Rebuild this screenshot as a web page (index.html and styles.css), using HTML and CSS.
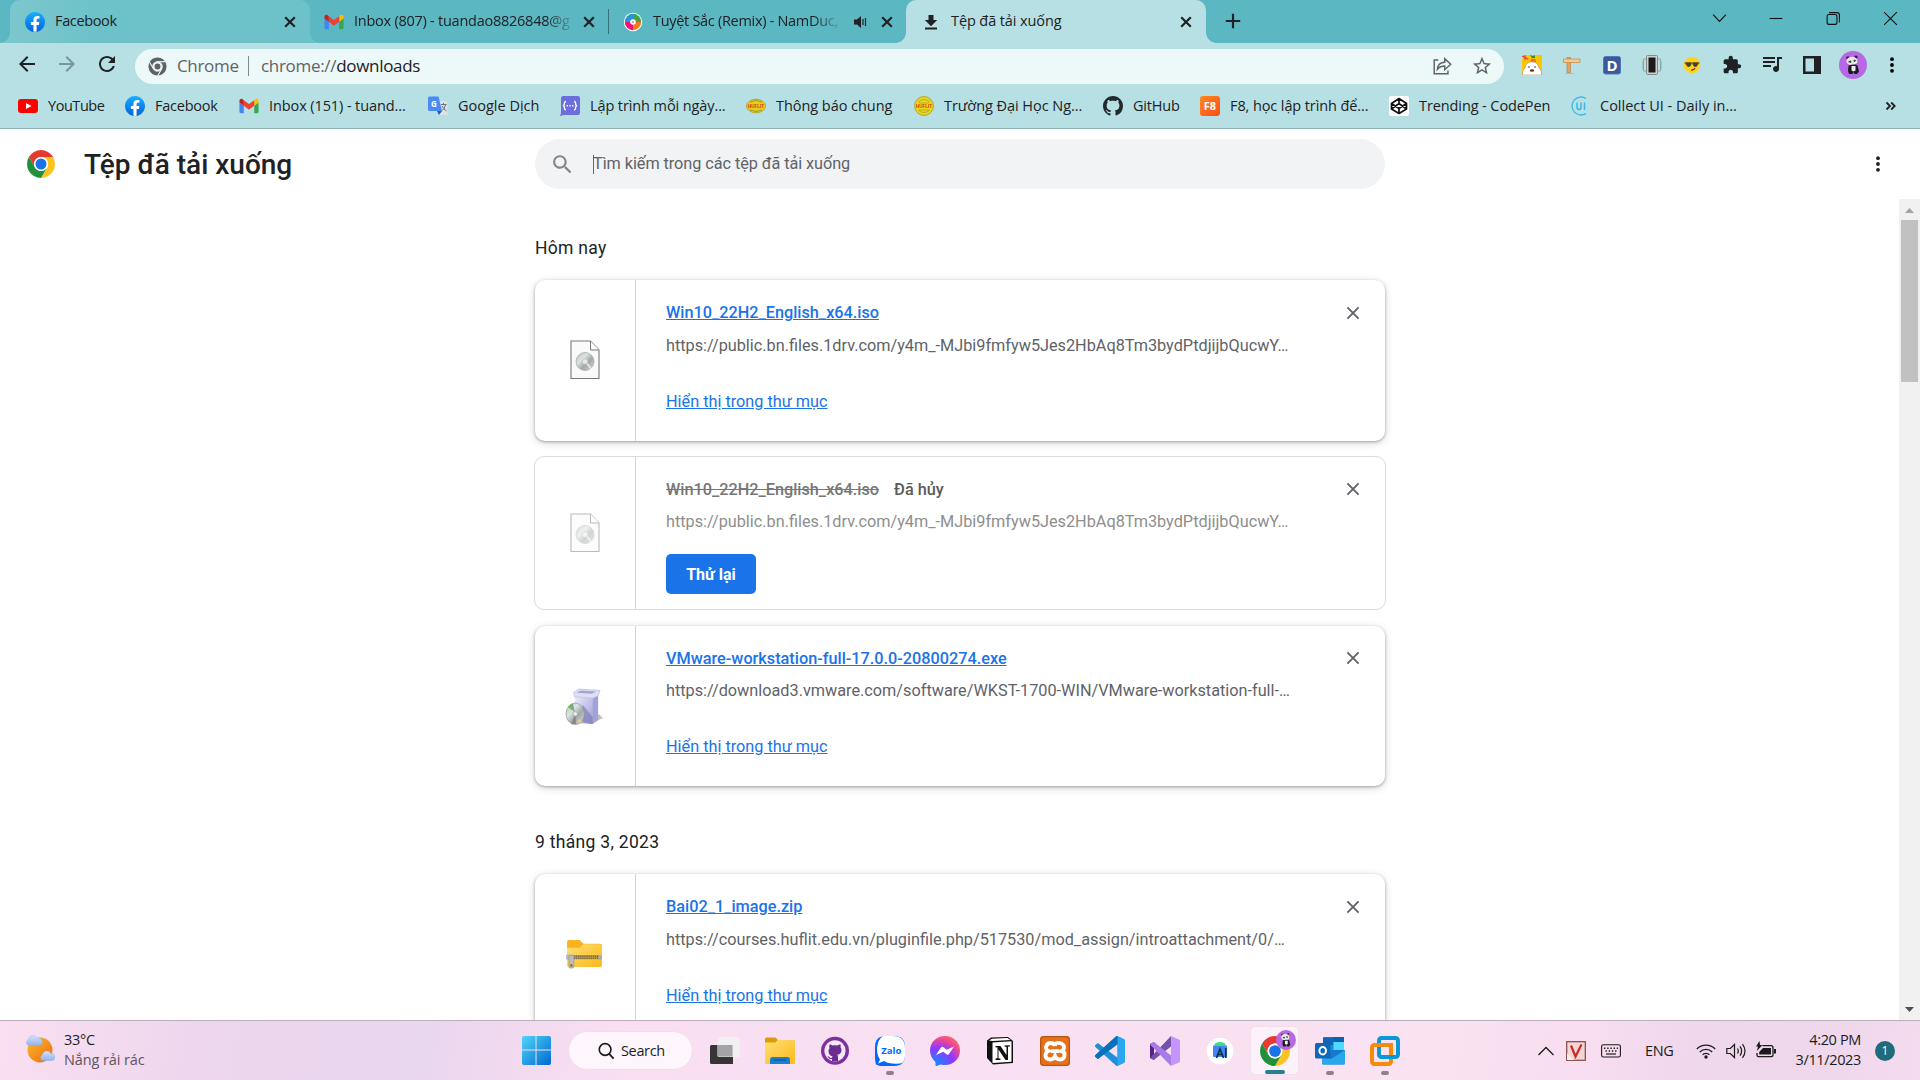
FILE: index.html
```html
<!DOCTYPE html>
<html lang="vi">
<head>
<meta charset="utf-8">
<title>Tệp đã tải xuống</title>
<link rel="stylesheet" href="styles.css">
</head>
<body>
<svg class="defs" aria-hidden="true">
  <defs>
    <linearGradient id="fbg" x1="0" y1="0" x2="0" y2="1"><stop offset="0" stop-color="#19afff"/><stop offset="1" stop-color="#0062e0"/></linearGradient>
    <linearGradient id="win" x1="0" y1="0" x2="1" y2="1"><stop offset="0" stop-color="#4fd5fc"/><stop offset="1" stop-color="#0069cf"/></linearGradient>
    <linearGradient id="fold" x1="0" y1="0" x2="1" y2="1"><stop offset="0" stop-color="#ffe071"/><stop offset="1" stop-color="#fbb91d"/></linearGradient>
    <linearGradient id="f8g" x1="0" y1="0" x2="1" y2="1"><stop offset="0" stop-color="#ff8a1f"/><stop offset="1" stop-color="#ff4a1c"/></linearGradient>
    <linearGradient id="disc" x1="0" y1="0" x2="1" y2="1"><stop offset="0" stop-color="#b4b4b4"/><stop offset=".35" stop-color="#d9e6e2"/><stop offset=".6" stop-color="#a3a9a8"/><stop offset="1" stop-color="#d8d8d8"/></linearGradient>
    <linearGradient id="sun" x1="0" y1="0" x2="1" y2="1"><stop offset="0" stop-color="#f8bd2c"/><stop offset="1" stop-color="#ef6a10"/></linearGradient>
    <linearGradient id="cloud" x1="0" y1="0" x2="0" y2="1"><stop offset="0" stop-color="#d4e4fa"/><stop offset="1" stop-color="#92b3ec"/></linearGradient>
    <radialGradient id="msg" cx=".2" cy="1" r="1.1"><stop offset="0" stop-color="#0a90ff"/><stop offset=".55" stop-color="#8f38ff"/><stop offset=".8" stop-color="#e8459c"/><stop offset="1" stop-color="#ff6a68"/></radialGradient>
    <linearGradient id="box" x1="0" y1="0" x2="1" y2="1"><stop offset="0" stop-color="#ebebff"/><stop offset="1" stop-color="#9b9bd4"/></linearGradient>
    <symbol id="facebook" viewBox="0 0 24 24"><circle cx="12" cy="12" r="11" fill="#fff"/><path fill="url(#fbg)" d="M24 12.07C24 5.4 18.63 0 12 0S0 5.4 0 12.07C0 18.1 4.39 23.1 10.13 24v-8.44H7.08v-3.49h3.04V9.41c0-3.02 1.8-4.7 4.54-4.7 1.31 0 2.68.24 2.68.24v2.97h-1.5c-1.5 0-1.96.93-1.96 1.89v2.26h3.33l-.53 3.49h-2.8V24C19.62 23.1 24 18.1 24 12.07z"/></symbol>
    <symbol id="gmail" viewBox="50 29 92 92"><path fill="#4285f4" d="M58 108h14V74L52 59v43c0 3.32 2.69 6 6 6"/><path fill="#34a853" d="M120 108h14c3.32 0 6-2.69 6-6V59l-20 15"/><path fill="#fbbc04" d="M120 48v26l20-15v-8c0-7.42-8.47-11.65-14.4-7.2"/><path fill="#ea4335" d="M72 74V48l24 18 24-18v26L96 92"/><path fill="#c5221f" d="M52 51v8l20 15V48l-5.6-4.2c-5.94-4.45-14.4-.22-14.4 7.2"/></symbol>
    <symbol id="close" viewBox="0 0 20 20"><path d="M5.2 5.2l9.6 9.6M14.8 5.2l-9.6 9.6" fill="none" stroke="#202124" stroke-width="2.2"/></symbol>
    <symbol id="remove" viewBox="0 0 20 20"><path d="M4.4 4.4l11.2 11.2M15.6 4.4L4.4 15.6" fill="none" stroke="#5f6368" stroke-width="1.9"/></symbol>
    <symbol id="arrow" viewBox="0 0 24 24"><path d="M20 11H7.83l5.59-5.59L12 4l-8 8 8 8 1.41-1.41L7.83 13H20v-2z"/></symbol>
    <symbol id="search" viewBox="0 0 24 24"><path d="M15.5 14h-.79l-.28-.27C15.41 12.59 16 11.11 16 9.5 16 5.91 13.09 3 9.5 3S3 5.91 3 9.5 5.91 16 9.5 16c1.61 0 3.09-.59 4.23-1.57l.27.28v.79l5 4.99L20.49 19l-4.99-5zm-6 0C7.01 14 5 11.99 5 9.5S7.01 5 9.5 5 14 7.01 14 9.5 11.99 14 9.5 14z"/></symbol>
    <symbol id="dots" viewBox="0 0 24 24"><circle cx="12" cy="5" r="2.3"/><circle cx="12" cy="12" r="2.3"/><circle cx="12" cy="19" r="2.3"/></symbol>
    <symbol id="chrome" viewBox="0 0 48 48"><path fill="#e33b2e" d="M3.22 12A24 24 0 0 1 44.78 12H24A12 12 0 0 0 13.61 30z"/><path fill="#fcc31e" d="M44.78 12A24 24 0 0 1 24 48L34.39 30A12 12 0 0 0 24 12z"/><path fill="#21903c" d="M24 48A24 24 0 0 1 3.22 12L13.61 30A12 12 0 0 0 34.39 30z"/><circle cx="24" cy="24" r="12" fill="#fff"/><circle cx="24" cy="24" r="9.4" fill="#1a73e8"/></symbol>
    <symbol id="octo" viewBox="0 0 16 16"><path d="M8 0C3.58 0 0 3.58 0 8c0 3.54 2.29 6.53 5.47 7.59.4.07.55-.17.55-.38 0-.19-.01-.82-.01-1.49-2.01.37-2.53-.49-2.69-.94-.09-.23-.48-.94-.82-1.13-.28-.15-.68-.52-.01-.53.63-.01 1.08.58 1.23.82.72 1.21 1.87.87 2.33.66.07-.52.28-.87.51-1.07-1.78-.2-3.64-.89-3.64-3.95 0-.87.31-1.59.82-2.15-.08-.2-.36-1.02.08-2.12 0 0 .67-.21 2.2.82.64-.18 1.32-.27 2-.27.68 0 1.36.09 2 .27 1.53-1.04 2.2-.82 2.2-.82.44 1.1.16 1.92.08 2.12.51.56.82 1.27.82 2.15 0 3.07-1.87 3.75-3.65 3.95.29.25.54.73.54 1.48 0 1.07-.01 1.93-.01 2.2 0 .21.15.46.55.38A8.01 8.01 0 0016 8c0-4.42-3.58-8-8-8z"/></symbol>
    <symbol id="panda" viewBox="0 0 28 28"><circle cx="14" cy="14" r="14" fill="#b768e4"/><circle cx="9" cy="7" r="1.800" fill="#222"/><circle cx="17" cy="6" r="1.600" fill="#222"/><ellipse cx="13" cy="10" rx="5.600" ry="4.300" fill="#e8e8e8"/><path d="M9.500 10.800l2.300-1v1.800zM14.800 9.200l2 .2-1.500 1.500z" fill="#222" stroke="#222" stroke-width=".6"/><path d="M9.500 14.500c3-1 7-1.500 9 0l1.500 6-2 2.500h-2.500l-1-2-1 2h-3.500l-1-3z" fill="#1c1c20"/><path d="M12.500 15h4v4.500l-2 1-2-1z" fill="#eee"/></symbol>
    <symbol id="iso" viewBox="0 0 30 40"><path d="M1 1h19.500l8.500 9v28.500H1z" fill="#fafafa" stroke="#777" stroke-width="1.100"/><path d="M20.500 1v9H29" fill="#fff" stroke="#777"/><circle cx="15" cy="21.500" r="9" fill="url(#disc)" stroke="#aaa" stroke-width=".800"/><path d="M17 23.500l4 5" stroke="#eee" stroke-width="1.500"/><circle cx="15" cy="21.500" r="2.800" fill="#e8e8e8" stroke="#bbb" stroke-width=".700"/></symbol>
  </defs>
</svg>

<div class="screen">
  <div class="tabstrip">
    <div class="tab tab-hover"><svg class="i20"><use href="#facebook"/></svg><span class="tab-label">Facebook</span><svg class="i20"><use href="#close"/></svg></div>
    <div class="tab tab-mail"><svg class="i20"><use href="#gmail"/></svg><span class="tab-label fade">Inbox (807) - tuandao8826848@g</span><svg class="i20"><use href="#close"/></svg></div>
    <div class="tab-sep"></div>
    <div class="tab tab-music">
      <svg class="i20" viewBox="0 0 20 20"><circle cx="10" cy="10" r="9.200" fill="#fff"/><path d="M10 10V1.800A8.200 8.200 0 0 1 18.200 10z" fill="#46a247"/><path d="M10 10h8.200A8.200 8.200 0 0 1 10 18.200z" fill="#f47a20"/><path d="M10 10v8.200A8.200 8.200 0 0 1 1.800 10z" fill="#ec1378"/><path d="M10 10H1.800A8.200 8.200 0 0 1 10 1.800z" fill="#2196dc"/><circle cx="10" cy="10" r="2.800" fill="#fff"/><circle cx="10" cy="10" r="1" fill="#f08090"/></svg>
      <span class="tab-label fade">Tuyệt Sắc (Remix) - NamDuc,</span>
      <svg class="i20 speaker" viewBox="0 0 20 20"><path d="M4 7.500h3L11 4v12l-4-3.500H4z" fill="#202124"/><path d="M13 7v6M15.500 6v8" stroke="#202124" stroke-width="1.200"/></svg>
      <svg class="i20"><use href="#close"/></svg>
    </div>
    <div class="tab tab-active"><svg class="i20" viewBox="0 0 20 20"><path d="M7.500 3h5v5h3.700L10 14.200 3.800 8h3.700zM4 15.500h12v2H4z" fill="#202124"/></svg><span class="tab-label">Tệp đã tải xuống</span><svg class="i20"><use href="#close"/></svg></div>
    <svg class="newtab" viewBox="0 0 20 20"><path d="M10 2.800v14.400M2.800 10h14.400" stroke="#202124" stroke-width="2.200"/></svg>
    <div class="winctl">
      <svg viewBox="0 0 58 36"><path d="M22.500 14.500l6.500 7 6.500-7" /></svg>
      <svg viewBox="0 0 58 36"><path d="M22 18.500h13"/></svg>
      <svg viewBox="0 0 58 36"><rect x="22.500" y="14.500" width="10" height="10" rx="2"/><path d="M24.500 12.500h8q2.500 0 2.500 2.500v7.500"/></svg>
      <svg viewBox="0 0 58 36"><path d="M22.500 12l13 13M35.500 12l-13 13"/></svg>
    </div>
  </div>

  <div class="toolbar">
    <div class="nav">
      <svg viewBox="0 0 24 24"><use href="#arrow"/></svg>
      <svg class="forward" viewBox="0 0 24 24"><use href="#arrow"/></svg>
      <svg viewBox="0 0 24 24"><path d="M17.65 6.350C16.200 4.900 14.210 4 12 4c-4.420 0-7.990 3.580-7.990 8s3.570 8 7.990 8c3.730 0 6.840-2.550 7.730-6h-2.080c-.82 2.330-3.040 4-5.650 4-3.310 0-6-2.690-6-6s2.690-6 6-6c1.660 0 3.140.690 4.220 1.780L13 11h7V4l-2.350 2.350z"/></svg>
    </div>
    <div class="omnibox">
      <svg class="site" viewBox="0 0 48 48"><g fill="#5f6368" stroke="#edf8f8" stroke-width="2.500"><path d="M3.220 12A24 24 0 0 1 44.780 12H24A12 12 0 0 0 13.610 30z"/><path d="M44.780 12A24 24 0 0 1 24 48L34.390 30A12 12 0 0 0 24 12z"/><path d="M24 48A24 24 0 0 1 3.220 12L13.610 30A12 12 0 0 0 34.390 30z"/></g><circle cx="24" cy="24" r="7.500" fill="#5f6368"/></svg>
      <span class="scheme">Chrome</span><span class="omni-sep"></span><span class="url"><span class="grey">chrome://</span>downloads</span>
      <svg class="share" viewBox="0 0 24 24"><path d="M8 5.500H3.500v15h15V17M7 15.500c.5-5 3-7.500 8-7.500V4l6.500 6-6.500 6v-4c-4 0-6 1-8 3.500z" fill="none" stroke="#5f6368" stroke-width="1.600"/></svg>
      <svg class="star" viewBox="0 0 24 24"><path fill="#5f6368" d="M22 9.240l-7.190-.620L12 2 9.190 8.630 2 9.240l5.460 4.730L5.820 21 12 17.270 18.180 21l-1.630-7.030L22 9.240zM12 15.400l-3.760 2.270 1-4.280-3.320-2.880 4.380-.380L12 6.100l1.710 4.040 4.380.380-3.320 2.880 1 4.280L12 15.400z"/></svg>
    </div>
    <div class="exts">
      <svg viewBox="0 0 20 20"><path fill="#ffc400" d="M2 0h18v20H0V5z"/><path d="M.5 20c-.5-4 1-6 2.500-7 .5-4 3-6 7-6s6 2 7 6c1.500 1 3 3 2.500 7z" fill="#fff" stroke="#a67c52" stroke-width=".5"/><path d="M8 6.500l1.500-3 4 .5 1 3z" fill="#e77817"/><path d="M10 3L8 0l3 1 2-1v3z" fill="#3c8a3a"/><path d="M0 1l6 3M3 0v5" stroke="#e33a5a" stroke-width="1.200"/><circle cx="7" cy="12" r=".7"/><circle cx="13" cy="12" r=".7"/><ellipse cx="10" cy="15.500" rx="2.200" ry="1.200" fill="#7a2c10"/></svg>
      <svg viewBox="0 0 20 20"><path d="M5 2.500h3.500v15H5z" fill="#e3a260" stroke="#b97b3c" stroke-width=".6"/><path d="M1.500 4h16.500v3.500h-16.500z" fill="#f6c98c" stroke="#c48742" stroke-width=".7"/><path d="M3 18.500h9" stroke="#9cc4c6"/></svg>
      <svg viewBox="0 0 20 20"><rect x="1.500" y="1.500" width="17" height="17.500" rx="2" fill="#3b5998" stroke="#5277bb"/><text x="10" y="15.800" text-anchor="middle" class="d-letter">D</text></svg>
      <svg viewBox="0 0 20 20"><path d="M4 4H1.500v12H4M16 4h2.500v12H16M0 6v8M20 6v8" fill="none" stroke="#8ea8aa"/><rect x="4.500" y=".5" width="11" height="19" rx="1" fill="#d0d0d0" stroke="#888"/><rect x="6.500" y="2.500" width="7" height="15" fill="#1b1b1b"/></svg>
      <svg viewBox="0 0 20 20"><circle cx="10" cy="10" r="8.300" fill="#ffd21c"/><path d="M2.500 8h15M4 8h5c0 5-4.500 4.500-5 0zM11 8h5c-.5 4.500-5 5-5 0z" fill="#4a4230" stroke="#4a4230"/><path d="M9 15q3 .5 4-2" fill="none" stroke="#5a3b12" stroke-width="1.200"/></svg>
      <svg viewBox="0 0 24 24"><path fill="#202124" d="M20.500 11H19V7c0-1.100-.9-2-2-2h-4V3.500C13 2.120 11.880 1 10.500 1S8 2.120 8 3.500V5H4c-1.100 0-1.990.9-1.990 2v3.800H3.500c1.490 0 2.700 1.210 2.700 2.700s-1.210 2.700-2.700 2.700H2V20c0 1.100.9 2 2 2h3.800v-1.500c0-1.490 1.210-2.700 2.700-2.700 1.490 0 2.700 1.210 2.700 2.700V22H17c1.100 0 2-.9 2-2v-4h1.500c1.380 0 2.500-1.120 2.500-2.500S21.880 11 20.500 11z"/></svg>
      <svg viewBox="2 3 20 20"><path fill="#202124" d="M15 5H3v2h12V5zm0 4H3v2h12V9zM3 15h8v-2H3v2zM17 5v9.180c-.31-.110-.65-.180-1-.180-1.660 0-3 1.340-3 3s1.340 3 3 3 3-1.340 3-3V7h3V5h-5z"/></svg>
      <svg viewBox="0 0 20 20"><path fill="#202124" fill-rule="evenodd" d="M1 1h18v18H1zM3.500 3.500v13H12v-13z"/></svg>
      <svg class="avatar"><use href="#panda"/></svg>
      <svg viewBox="0 0 24 24"><use href="#dots"/></svg>
    </div>
  </div>

  <div class="bookmarks">
    <div class="bm b1"><svg viewBox="0 0 20 20"><rect y="3" width="20" height="14" rx="3" fill="red"/><path d="M8 7l5.500 3L8 13z" fill="#fff"/></svg><span>YouTube</span></div>
    <div class="bm b2"><svg><use href="#facebook"/></svg><span>Facebook</span></div>
    <div class="bm b3"><svg><use href="#gmail"/></svg><span>Inbox (151) - tuand...</span></div>
    <div class="bm b4"><svg viewBox="0 0 20 20"><path d="M8 5h10q1.500 0 1.500 1.500V19H11z" fill="#dfe1e5"/><path d="M1.500 0.500h9L14 15H1.500Q0 15 0 13.500V2Q0 .5 1.500.5z" fill="#4a8af4"/><path d="M9 15h5l-3 4z" fill="#2d56b8"/><text x="6" y="11" text-anchor="middle" class="g-letter">G</text><path d="M13 8.500h5.500M15.500 7v1.500M17.500 9q-1 4-4 6M14 10q1.500 3 4.500 5" stroke="#5f7480" fill="none"/></svg><span>Google Dịch</span></div>
    <div class="bm b5"><svg viewBox="0 0 20 20"><path d="M3 0h15q2 0 2 2v15q0 2-2 2H4l-4 1L1 17V2q0-2 2-2z" fill="#6d6ede"/><path d="M6 5.500q-1.600 0-1.600 1.600v1.400L3.400 9.700l1 1.200v1.400q0 1.600 1.600 1.600M14 5.500q1.600 0 1.600 1.600v1.400l1 1.200-1 1.200v1.400q0 1.600-1.600 1.600" stroke="#fff" stroke-width="1.300" fill="none"/><path d="M6.600 9.700h7" stroke="#fff" stroke-width="1.400" stroke-dasharray="1.400 1.300"/></svg><span>Lập trình mỗi ngày...</span></div>
    <div class="bm b6"><svg viewBox="0 0 20 20"><ellipse cx="10" cy="10" rx="9.500" ry="6.800" fill="#e6cf18" stroke="#b5aa30"/><path d="M4 6q6-3 12 0M4 14q6 3 12 0" stroke="#9a9a38" fill="none"/><text x="10" y="12" text-anchor="middle" class="h-letter">HUFLIT</text></svg><span>Thông báo chung</span></div>
    <div class="bm b7"><svg viewBox="0 0 20 20"><circle cx="10" cy="10" r="9.400" fill="#edd815" stroke="#b0a52c"/><path d="M4 6q6-5 12 0M4 14q6 5 12 0M5 7h10M5 14h10" stroke="#a5a433" stroke-width=".8" fill="none"/><text x="10" y="12.300" text-anchor="middle" class="h-letter">HUFLIT</text></svg><span>Trường Đại Học Ng...</span></div>
    <div class="bm b8"><svg fill="#24292f"><use href="#octo"/></svg><span>GitHub</span></div>
    <div class="bm b9"><svg viewBox="0 0 20 20"><rect width="20" height="20" rx="3" fill="url(#f8g)"/><text x="10" y="14.200" text-anchor="middle" class="f8-letter">F8</text></svg><span>F8, học lập trình để...</span></div>
    <div class="bm b10"><svg viewBox="0 0 20 20"><rect width="20" height="20" rx="2" fill="#fff"/><path d="M10 2.500L17.500 7.500v5.500L10 17.500 2.500 13V7.500zM10 2.500v5M10 12.500v5M2.500 7.500L10 12.500l7.500-5M2.500 13L10 7.500 17.500 13" fill="none" stroke="#111" stroke-width="1.700" stroke-linejoin="round"/></svg><span>Trending - CodePen</span></div>
    <div class="bm b11"><svg viewBox="0 0 20 20"><path d="M16 2.500A9 9 0 1 0 16 17.500" fill="none" stroke="#38b6ea" stroke-width="1.300"/><path d="M7 6.500v4.500q0 2.500 2 2.500t2-2.500V6.500M14.500 6.500v7.500" fill="none" stroke="#38b6ea" stroke-width="1.500"/></svg><span>Collect UI - Daily in...</span></div>
    <svg class="more" viewBox="0 0 12 12"><path d="M1.500 2.500l3.500 3.500-3.500 3.500M6.200 2.500L9.700 6 6.200 9.500" fill="none" stroke="#202124" stroke-width="1.800"/></svg>
  </div>

  <header class="page-head">
    <svg class="logo"><use href="#chrome"/></svg>
    <h1>Tệp đã tải xuống</h1>
    <div class="searchbox"><svg fill="#80868b"><use href="#search"/></svg><span class="caret"></span><span class="placeholder">Tìm kiếm trong các tệp đã tải xuống</span></div>
    <svg class="menu" fill="#202124"><use href="#dots"/></svg>
  </header>

  <div class="body">
    <main class="list">
      <h2>Hôm nay</h2>
      <article class="card">
        <div class="thumb"><svg class="iso"><use href="#iso"/></svg></div>
        <div class="info"><div class="name"><a>Win10_22H2_English_x64.iso</a></div><div class="src">https://public.bn.files.1drv.com/y4m_-MJbi9fmfyw5Jes2HbAq8Tm3bydPtdjijbQucwY…</div><a class="show">Hiển thị trong thư mục</a></div>
        <svg class="remove"><use href="#remove"/></svg>
      </article>
      <article class="card cancelled">
        <div class="thumb"><svg class="iso"><use href="#iso"/></svg></div>
        <div class="info"><div class="name"><s>Win10_22H2_English_x64.iso</s><span class="tag">Đã hủy</span></div><div class="src">https://public.bn.files.1drv.com/y4m_-MJbi9fmfyw5Jes2HbAq8Tm3bydPtdjijbQucwY…</div><button class="retry">Thử lại</button></div>
        <svg class="remove"><use href="#remove"/></svg>
      </article>
      <article class="card third">
        <div class="thumb"><svg class="exe" viewBox="0 0 40 40"><path d="M24 37l15-6-4-4z" fill="#999" opacity=".6"/><path d="M10 9l19 1-.5 27-18.500-1z" fill="url(#box)"/><path d="M28.500 10l5.500-3.500V33l-5.500 4z" fill="#a2a2d8"/><path d="M18 17l10.500 13V37L18 35z" fill="#7e7ebc" opacity=".65"/><path d="M9 4.500L14 1l22 1.500L34 8l-5.500 2.500L9.500 9z" fill="#dedef4" stroke="#b9b9de" stroke-width=".7"/><path d="M12 4.800L16 2.500l16 1-4.500 2.500z" fill="#a6a6ce"/><ellipse cx="10.500" cy="26.500" rx="9.500" ry="11" fill="url(#disc)" stroke="#888" stroke-width=".6"/><path d="M10.500 26.500L5 18l3-2zM10.500 26.500l1 10.500h-5z" fill="#777" opacity=".7"/><path d="M8 23.500l-5-4 3-3z" fill="#5ec45a"/><path d="M14 31.500l3 2.500-3 2z" fill="#eee04a"/><circle cx="10.500" cy="26.500" r="2.300" fill="#eee" stroke="#999" stroke-width=".6"/></svg></div>
        <div class="info"><div class="name"><a>VMware-workstation-full-17.0.0-20800274.exe</a></div><div class="src">https://download3.vmware.com/software/WKST-1700-WIN/VMware-workstation-full-…</div><a class="show">Hiển thị trong thư mục</a></div>
        <svg class="remove"><use href="#remove"/></svg>
      </article>
      <h2 class="later">9 tháng 3, 2023</h2>
      <article class="card">
        <div class="thumb"><svg class="zip" viewBox="0 0 40 32"><path d="M2 3q0-2 2-2h11l4 4h17q2 0 2 2v3H2z" fill="#f9b41f"/><path d="M2 9h13l4-3.500h17q2 0 2 2V27q0 2-2 2H4q-2 0-2-2z" fill="url(#fold)"/><path d="M4 16.500h33v4.500H4z" fill="#cda53f"/><path d="M9 17.800h25M9 19.800h25" stroke="#60594a" stroke-width="1.600" stroke-dasharray="1 1"/><rect x="1" y="16" width="8" height="5.500" rx="1" fill="#b8b8b8"/><rect x="34" y="16.500" width="4" height="4.500" fill="#aaa"/><rect x="4" y="17" width="5" height="13" rx="1" fill="#bdbdbd" stroke="#8a8a8a" stroke-width=".6"/><rect x="5.500" y="26" width="2" height="2.500" fill="#8c6a10"/></svg></div>
        <div class="info"><div class="name"><a>Bai02_1_image.zip</a></div><div class="src">https://courses.huflit.edu.vn/pluginfile.php/517530/mod_assign/introattachment/0/…</div><a class="show">Hiển thị trong thư mục</a></div>
        <svg class="remove"><use href="#remove"/></svg>
      </article>
    </main>
    <div class="scrollbar">
      <svg viewBox="0 0 21 21"><path d="M6 14l4.500-5 4.500 5z" fill="#a3a3a3"/></svg>
      <div class="thumbbar"></div>
      <svg class="down" viewBox="0 0 21 21"><path d="M6 8l4.500 5L15 8z" fill="#505050"/></svg>
    </div>
  </div>

  <footer class="taskbar">
    <div class="weather">
      <svg viewBox="0 0 30 30"><circle cx="15" cy="16" r="12.500" fill="url(#sun)"/><path d="M3.500 11.500a3.200 3.200 0 0 1 0-6 4.500 4.500 0 0 1 8.500-1.500 3.800 3.800 0 0 1 2.500 7.500z" fill="url(#cloud)" stroke="#8eaae0" stroke-width=".4"/><path d="M17.500 26.500a3.300 3.300 0 0 1 0-6 4.600 4.600 0 0 1 8.500-1 3.600 3.600 0 0 1 1.500 7z" fill="url(#cloud)" stroke="#8eaae0" stroke-width=".4"/></svg>
      <div class="wtext"><span class="temp">33°C</span><span class="cond">Nắng rải rác</span></div>
    </div>
    <div class="apps">
      <svg class="start" viewBox="0 0 30 30"><path d="M2 0h12v14H0V2Q0 0 2 0zM15 0h13q2 0 2 2v12H15zM0 15h14v15H2q-2 0-2-2zM15 15h15v13q0 2-2 2H15z" fill="url(#win)"/></svg>
      <div class="pill"><svg viewBox="0 0 20 20"><circle cx="9" cy="8.300" r="6.500" fill="none" stroke="#1c1c1c" stroke-width="1.800"/><path d="M13.500 13.200l5 5.300" stroke="#1c1c1c" stroke-width="2"/></svg><span>Search</span></div>
      <div class="app"><svg viewBox="0 0 30 30"><path d="M1.500 9H23v19H1.500Q0 28 0 26.500v-16Q0 9 1.500 9z" fill="#363434"/><rect x="7.500" y="1" width="22" height="20" rx="1.500" fill="#f1f1f3" opacity=".93"/><path d="M7.500 9H22.500v11.500H8.500q-1 0-1-1z" fill="#a5a3a5"/></svg></div>
      <div class="app"><svg viewBox="0 0 30 30"><path d="M0 3q0-1.500 1.500-1.500H10q1 0 2 1.500l1 1.500h15.500Q30 4.500 30 6v5H0z" fill="#dc9c0a"/><path d="M0 6.500h10l3-2.500h15.500Q30 4 30 5.500v21q0 1.500-1.500 1.500h-27Q0 28 0 26.500z" fill="url(#fold)"/><path d="M5 28v-4.500q0-2.500 2.500-2.500h15q2.500 0 2.500 2.500V28z" fill="#1b7fd0"/><path d="M9 24h12" stroke="#0f4d88" stroke-width="1.200" stroke-linecap="round"/></svg></div>
      <div class="app"><svg viewBox="0 0 30 30"><circle cx="15" cy="14.800" r="14" fill="#7d30a0"/><circle cx="15" cy="14.800" r="10.600" fill="#f4e9f6"/><path d="M9.500 8.500q1.500-.3 3.200 1 2.300-.5 4.600 0 1.700-1.300 3.200-1 .5 1.500 0 2.800 1 1.200 1 2.700 0 4.200-4.200 4.700.7.800.7 2.200v4.300h-6v-2.300q-2.700.5-3.500-1.200-.4-1-1.300-1.500 1.500-.3 2.300 1 .9 1.200 2.500.6.100-1 .6-1.500-4.100-.8-4.100-5.300 0-1.500 1-2.700-.5-1.300 0-3.800z" fill="#6c2c91"/></svg></div>
      <div class="app open"><svg viewBox="0 0 30 30"><path d="M11 0h8q11 0 11 11v8q0 11-11 11H5l-4-1.500Q0 26 0 19v-8Q0 0 11 0z" fill="#0068ff"/><path d="M8 0h10q12 0 12 12v7q0 6-3 8-3 1-10 .5-5-.3-8-2.500l-6 2.500 2-4Q2 20 2 12 3 3 8 0z" fill="#fff"/><text x="16.300" y="17.500" text-anchor="middle" class="zalo">Zalo</text></svg></div>
      <div class="app"><svg viewBox="0 0 30 30"><path d="M15 0c8.500 0 15 6.200 15 14.500S23.500 29 15 29c-1.500 0-3-.2-4.200-.6L6.500 30q-1 0-1-1v-3C2 23 0 19 0 14.500 0 6.200 6.500 0 15 0z" fill="url(#msg)"/><path d="M6 19l5-7.500q1-1.200 2.200-.4l3.500 2.600 7.300-3.200-5 7.500q-1 1.200-2.200.4l-3.500-2.600z" fill="#fff"/></svg></div>
      <div class="app"><svg viewBox="0 0 30 30"><path d="M2 4.500l4-3L23 1l5 4v22L8 28.500 2 22z" fill="#111"/><path d="M7.500 6.500l19-1.200v20.500l-19 1.200z" fill="#fff"/><path d="M4 4.500l3-1.700 15.500-.8 3 1.900-18 1z" fill="#fff"/><path d="M10.500 10h5l6 9V11l-2-.5V9.500l5.500-.3v1l-2 .6V24h-2.500l-7-10.500v8.700l2 .5v1.200h-5v-1.100l2-.7v-10.500l-2-.4z" fill="#111"/></svg></div>
      <div class="app"><svg viewBox="0 0 30 30"><rect width="30" height="30" rx="3" fill="#e8701a"/><rect x=".7" y=".7" width="28.600" height="28.600" rx="3" fill="none" stroke="#a94f12"/><path d="M15 10q-1-3-4.500-3T6 11q0 3 2.500 4Q5.500 16 5.500 19.500T10 23.500q4 0 5-3.500 1 3.500 5 3.500t4.500-4T21.500 15Q24 14 24 11t-4.500-4T15 10M11 15.200h8" fill="none" stroke="#fff" stroke-width="3.800"/></svg></div>
      <div class="app"><svg viewBox="0 0 100 100"><path fill="#1f8fdb" fill-rule="evenodd" d="M96.500 10.800L75.900.9a6.200 6.200 0 0 0-7.100 1.200L29.400 38 12.200 25a4.200 4.200 0 0 0-5.300.2L1.400 30.300a4.200 4.200 0 0 0 0 6.200L16.200 50 1.400 63.500a4.200 4.200 0 0 0 0 6.200l5.500 5a4.200 4.200 0 0 0 5.300.3l17.200-13 39.400 35.900a6.200 6.200 0 0 0 7.100 1.200l20.600-9.900a6.300 6.300 0 0 0 3.500-5.600V16.400a6.300 6.300 0 0 0-3.500-5.600zM75 72.700L45.100 50 75 27.300z"/><path fill="#2ba7f2" d="M75 1l22 10q3 2 3 5.500v67q0 3.500-3 5.500L75 99z"/><path d="M45 50L29.400 62l-17.200 13q-3 1.500-5.300-.3l-5.500-5q-2.500-3 0-6.200L68.800 2.100Q73-1 75 1v26.300z" fill="#0a72b8"/></svg></div>
      <div class="app"><svg viewBox="0 0 30 30"><path d="M0 8l4-2v18l-4-2z" fill="#52218a"/><path d="M4 24l-4-2L21 0v10.500L5 23z" fill="#7252aa"/><path d="M0 8l4-2 17 13.500V30L1 9.500z" fill="#a97be6"/><path d="M21 0l9 4v22l-9 4z" fill="#c695fb"/></svg></div>
      <div class="app"><svg viewBox="0 0 30 30"><circle cx="15" cy="15" r="13.300" fill="#fff"/><rect x="8" y="9.500" width="14" height="11.500" rx="1" fill="#4285f4"/><path d="M9 10a6 4 0 0 1 12 0z" fill="#3ddc84"/><path d="M11.500 22l3.500-9 3.500 9M13 18.500h4M20.800 12v10" stroke="#083042" stroke-width="1.700" fill="none"/></svg></div>
      <div class="app current"><svg><use href="#chrome"/></svg><svg class="mini"><use href="#panda"/></svg></div>
      <div class="app open"><svg viewBox="0 0 30 30"><path d="M8 2.500Q8 1 9.500 1h18Q29 1 29 2.500V17H8z" fill="#1490df"/><path d="M8 1.500h10.500V9H8z" fill="#1066b5"/><path d="M18.500 6H29v9H18.500z" fill="#50d9ff"/><path d="M18.500 1H29v5H18.500z" fill="#0b61ad"/><path d="M7 14l23 0v13q0 1.500-1.500 1.500h-20Q7 28.500 7 27z" fill="#1579ce"/><path d="M30 14L16 23l-9-5v9q0 1.500 1.500 1.500h20Q30 28.500 30 27z" fill="#28a8ea"/><rect y="7" width="15.500" height="15.500" rx="1.500" fill="#0f67b7"/><ellipse cx="7.700" cy="14.700" rx="3.300" ry="3.700" fill="none" stroke="#fff" stroke-width="2"/></svg></div>
      <div class="app open"><svg viewBox="0 0 30 30"><rect x="2" y="9" width="19" height="19" rx="2.500" fill="none" stroke="#f58b0a" stroke-width="4"/><rect x="9" y="2" width="19" height="19" rx="2.500" fill="none" stroke="#0b98d8" stroke-width="4"/><path d="M6 9h15v7" fill="none" stroke="#f58b0a" stroke-width="4"/></svg></div>
    </div>
    <div class="tray">
      <svg class="up" viewBox="0 0 20 20"><path d="M2.500 14L10 6.500l7.500 7.500" fill="none" stroke="#1c1c1c" stroke-width="1.300"/></svg>
      <svg class="uni" viewBox="0 0 20 20"><rect x=".7" y=".7" width="18.600" height="18.600" fill="#f6d6d2" stroke="#80464a" stroke-width="1.200"/><path d="M1 12l7 7H1z" fill="#eee"/><path d="M5 4.500l4.500 11L15.500 3.500" fill="none" stroke="#c32d2b" stroke-width="2.200"/></svg>
      <svg class="kbd" viewBox="0 0 20 20"><rect x=".6" y="3.700" width="18.800" height="12.300" rx="1.800" fill="none" stroke="#1c1c1c" stroke-width="1.100"/><path d="M3 7.200h14M4.500 10h12" stroke="#1c1c1c" stroke-width="1.400" stroke-dasharray="1.400 1.800"/><path d="M5 13h10" stroke="#1c1c1c" stroke-width="1.200"/></svg>
      <span class="lang">ENG</span>
      <svg class="wifi" viewBox="0 0 20 20"><g fill="none" stroke="#1c1c1c" stroke-width="1.300"><path d="M.8 8a13 13 0 0 1 18.400 0M3.800 11a8.800 8.800 0 0 1 12.400 0M6.600 13.800a4.800 4.800 0 0 1 6.800 0"/></g><circle cx="10" cy="16" r="1.700" fill="#1c1c1c"/></svg>
      <svg class="vol" viewBox="0 0 20 20"><path d="M.8 7.500h3.500L8.500 3.500v13L4.300 12.500H.8zM11.500 7.500q1.600 2.500 0 5M14 5.300q3.200 4.700 0 9.400M16.500 3.200q5 6.800 0 13.600" fill="none" stroke="#1c1c1c" stroke-width="1.200"/></svg>
      <svg class="bat" viewBox="0 0 20 20"><path d="M6.500 4.700H15q2 0 2 2v7q0 2-2 2H3q-2 0-2-2V12" fill="none" stroke="#1c1c1c" stroke-width="1.300"/><path d="M7 7h8v6.500H3.200V11zM18 8h2v4.500h-2zM3.500 0L0 5.500h2L.8 10l5.700-6H4z" fill="#1c1c1c"/></svg>
      <div class="clock"><span>4:20 PM</span><span>3/11/2023</span></div>
      <span class="badge">1</span>
    </div>
  </footer>
</div>
</body>
</html>
```
FILE: styles.css
```css
* { box-sizing: border-box; }
body { margin: 0; }
svg { display: block; flex: none; }
.defs { position: absolute; width: 0; height: 0; }
.screen {
  width: 1920px; height: 1080px; overflow: hidden;
  display: flex; flex-direction: column;
  background: #fff; color: #202124;
  font-family: "Open Sans", "Noto Sans", sans-serif;
}
.i20 { width: 20px; height: 20px; }

/* Tab strip */
.tabstrip { height: 43px; flex: none; display: flex; padding-left: 10px; background: #5bb7c1; }
.tab { height: 43px; display: flex; align-items: center; position: relative; font-size: 14.5px; letter-spacing: -.35px; }
.tab-label { flex: 1; min-width: 0; margin: 0 8px 2px 10px; white-space: nowrap; line-height: 24px; }
.fade { -webkit-mask-image: linear-gradient(to right, #000 calc(100% - 30px), transparent); mask-image: linear-gradient(to right, #000 calc(100% - 30px), transparent); }
.tab-hover { width: 300px; padding: 0 10px 0 15px; border-radius: 10px 10px 0 0; background: linear-gradient(to right, #7cc7cd, #6dc2c9 28%); }
.tab-mail { width: 298px; padding: 0 9px 0 14px; letter-spacing: -.25px; }
.tab-mail .tab-label { margin-right: 3px; }
.tab-sep { width: 1px; height: 25px; margin-top: 9px; background: #37707a; }
.tab-music { width: 297px; padding: 0 9px 0 14px; letter-spacing: -.3px; }
.tab-music .tab-label { margin-right: 7px; }
.speaker { margin-right: 7px; }
.tab-active { width: 300px; padding: 0 10px 0 15px; border-radius: 10px 10px 0 0; background: #b7e0e4; letter-spacing: -.1px; }
.tab-hover::before, .tab-active::before, .tab-hover::after, .tab-active::after {
  content: ""; position: absolute; bottom: 0; width: 10px; height: 10px;
}
.tab-hover::before, .tab-active::before { left: -10px; background: radial-gradient(circle at 0 0, transparent 9.5px, #b7e0e4 10px); }
.tab-hover::after, .tab-active::after { right: -10px; background: radial-gradient(circle at 100% 0, transparent 9.5px, #b7e0e4 10px); }
.tab-hover::before { background: radial-gradient(circle at 0 0, transparent 9.5px, #7cc7cd 10px); }
.tab-hover::after { background: radial-gradient(circle at 100% 0, transparent 9.5px, #6dc2c9 10px); }
.newtab { width: 20px; height: 20px; margin: 11px 0 0 17px; }
.winctl { display: flex; margin-left: auto; padding-right: 1px; }
.winctl svg { width: 57px; height: 36px; fill: none; stroke: #111; stroke-width: 1.1; }

/* Toolbar */
.toolbar { height: 45px; flex: none; display: flex; align-items: center; padding: 0 8px 4px 7px; background: #b7e0e4; }
.nav { display: flex; width: 128px; padding-top: 1px; }
.nav svg { width: 24px; height: 24px; margin: 0 8px; fill: #202124; }
.nav .forward { transform: scaleX(-1); fill: #76969a; }
.omnibox { width: 1370px; height: 35px; margin-top: 5px; border-radius: 18px; background: #edf8f8; display: flex; align-items: center; padding-left: 13px; font-size: 17px; letter-spacing: -.3px; white-space: nowrap; }
.omnibox span { padding-bottom: 1px; }
.site { width: 19px; height: 19px; }
.scheme { width: 61px; margin-left: 10px; color: #5f6368; }
.omni-sep { width: 1px; height: 20px; margin: 0 12px 0 10px; background: #80868b; }
.grey { color: #5f6368; }
.share { width: 22px; height: 22px; margin-left: auto; margin-right: 18px; }
.star { width: 22px; height: 22px; margin-right: 11px; }
.exts { display: flex; align-items: center; margin: 3px 0 0 8px; }
.exts svg { width: 20px; height: 20px; margin: 0 10px; }
.exts .avatar { width: 28px; height: 28px; margin: 0 5px 0 7px; }
.d-letter { font: bold 15px "Open Sans", sans-serif; fill: #fff; }

/* Bookmarks bar */
.bookmarks { height: 41px; flex: none; display: flex; align-items: center; padding: 0 23px 4px 18px; background: #b7e0e4; border-bottom: 1px solid #8cb1b6; font-size: 14.5px; letter-spacing: -.1px; }
.bm { display: flex; gap: 10px; align-items: center; flex: none; white-space: nowrap; }
.bm svg { width: 20px; height: 20px; }
.bm span { padding-bottom: 2px; }
.b1 { width: 107px; letter-spacing: -.45px; }
.b2 { width: 114px; letter-spacing: -.25px; }
.b3 { width: 189px; }
.b4 { width: 132px; letter-spacing: 0; }
.b5 { width: 186px; }
.b6 { width: 168px; letter-spacing: -.05px; }
.b7 { width: 189px; letter-spacing: -.05px; }
.b8 { width: 97px; letter-spacing: -.2px; }
.b9 { width: 189px; }
.b10 { width: 181px; }
.b11 { width: 170px; letter-spacing: 0; }
.more { width: 12px; height: 12px; margin-left: auto; }
.g-letter { font: bold 8px "Open Sans", sans-serif; fill: #fff; }
.h-letter { font: bold 4.5px "Liberation Sans", sans-serif; fill: #d0331b; letter-spacing: 0; }
.f8-letter { font: bold 11px "Open Sans", sans-serif; fill: #fff; letter-spacing: 0; }

/* Page header */
.page-head { height: 70px; flex: none; display: flex; align-items: center; padding-left: 27px; font-family: Roboto, sans-serif; }
.logo { width: 28px; height: 28px; }
h1 { width: 451px; margin: 0 0 0 29px; font-size: 28px; font-weight: 500; white-space: nowrap; }
.searchbox { width: 850px; height: 50px; border-radius: 25px; background: #f1f3f4; display: flex; align-items: center; padding-left: 15px; font-size: 16.25px; letter-spacing: -.06px; color: #5f6368; }
.searchbox svg { width: 25px; height: 25px; }
.placeholder { padding-bottom: 1px; }
.caret { width: 1px; height: 19px; margin-left: 18px; margin-right: -1px; background: #1a73e8; }
.menu { width: 20px; height: 20px; margin-left: 483px; }

/* Downloads list */
.body { height: 821px; flex: none; display: flex; overflow: hidden; font-family: Roboto, sans-serif; }
.list { width: 850px; margin-left: 535px; }
h2 { margin: 37px 0 20px; height: 24px; line-height: 24px; font-size: 17.5px; font-weight: 400; letter-spacing: .3px; }
h2.later { margin: 44px 0 20px; }
.card { height: 161px; display: flex; position: relative; border-radius: 10px; background: #fff; box-shadow: 0 1px 3px rgba(60,64,67,.4), 0 2px 8px rgba(60,64,67,.2); }
.thumb { width: 101px; border-right: 1px solid #d2d4d6; display: flex; align-items: center; justify-content: center; }
.iso { width: 30px; height: 40px; margin-bottom: 1px; }
.exe { width: 39px; height: 39px; margin: 2px 2px 0 0; }
.zip { width: 39px; height: 31px; margin-right: 1px; }
.info { flex: 1; padding: 23px 0 0 30px; }
.name { height: 20px; line-height: 20px; font-size: 16.25px; font-weight: 500; white-space: nowrap; }
a { color: #1a73e8; text-decoration: underline; }
.src { margin-top: 13px; height: 20px; line-height: 20px; font-size: 16.25px; color: #5f6368; white-space: nowrap; }
.show { display: block; width: max-content; margin-top: 36px; line-height: 20px; font-size: 16.25px; }
.remove { width: 20px; height: 20px; margin: 23px 22px 0 0; }
.cancelled { height: 154px; width: 852px; margin: 15px 0 16px -1px; border: 1px solid #dadce0; box-shadow: none; }
.cancelled .info { padding-top: 23px; }
.cancelled .src { margin-top: 12px; color: #8e8e8e; }
.cancelled .remove { margin-top: 22px; }
.cancelled .iso { opacity: .5; }
.cancelled .name { color: #777; }
.tag { margin-left: 15px; color: #5a5a5a; }
.retry { display: block; width: 90px; height: 40px; margin: 22px 0 0; padding: 0; border: 0; border-radius: 5px; background: #1a73e8; color: #fff; font: 700 16px Roboto, sans-serif; }
.third { height: 160px; }
.third .src { margin-top: 12px; }
.third .remove { margin-top: 22px; }
.scrollbar { width: 21px; margin-left: auto; background: #f1f1f1; display: flex; flex-direction: column; align-items: center; }
.scrollbar svg { width: 21px; height: 21px; }
.thumbbar { width: 17px; height: 162px; background: #c1c1c1; }
.scrollbar .down { margin-top: auto; }

/* Taskbar */
.taskbar { height: 60px; flex: none; display: flex; align-items: center; border-top: 1px solid #bcaebb; font-size: 14.5px; color: #1c1c1c;
  background: linear-gradient(100deg, #fadff0 0, #edd6ee 11%, #e9d6ef 22%, #f5dcf0 29%, #fadff2 33%, #f9e0f2 55%, #fae2f1 75%, #f8def0 82%, #f0d7eb 88%, #efd7ec 95%, #f5dbee 100%); }
.weather { width: 522px; display: flex; align-items: center; padding-left: 25px; gap: 9px; }
.weather svg { width: 30px; height: 30px; margin-bottom: 3px; }
.wtext { display: flex; flex-direction: column; line-height: 20px; letter-spacing: -.1px; padding-bottom: 2px; }
.temp { letter-spacing: -.3px; }
.cond { color: #5d5460; }
.apps { display: flex; align-items: center; }
.start { width: 29px; height: 29px; margin-right: 17px; }
.pill { width: 125px; height: 39px; border-radius: 20px; background: #fef6fc; border: 1px solid #f0dcec; display: flex; align-items: center; padding-left: 28px; gap: 6px; margin-right: 4px; letter-spacing: -.35px; }
.pill svg { width: 18px; height: 18px; }
.pill span { padding-bottom: 1px; }
.app { width: 55px; height: 49px; display: flex; align-items: center; justify-content: center; position: relative; }
.app > svg { width: 30px; height: 30px; }
.app.open::after { content: ""; position: absolute; bottom: 0; left: 24px; width: 8px; height: 4px; border-radius: 2px; background: #8f808c; }
.app.current { width: 49px; margin: 0 3px; border-radius: 5px; background: #fdf2f9; border: 1px solid #f3deed; }
.app.current::after { content: ""; position: absolute; bottom: 0; left: 14px; width: 20px; height: 4px; border-radius: 2px; background: #27808d; }
.app > .mini { position: absolute; left: 25px; top: 3px; width: 20px; height: 20px; }
.zalo { font: bold 9.5px "Open Sans", sans-serif; fill: #0068ff; }
.tray { display: flex; align-items: center; margin-left: auto; padding-right: 25px; }
.tray svg { width: 20px; height: 20px; }
.uni { margin-left: 10px; }
.kbd { margin-left: 15px; }
.lang { width: 29px; margin: 0 22px 0 24px; letter-spacing: -.4px; }
.vol { margin-left: 10px; }
.bat { margin-left: 10px; }
.clock { width: 75px; margin: 0 14px 0 10px; padding-bottom: 2px; display: flex; flex-direction: column; align-items: flex-end; line-height: 20px; letter-spacing: -.35px; white-space: nowrap; }
.badge { width: 20px; height: 20px; border-radius: 50%; background: #1e6b79; color: #fff; font-size: 12px; line-height: 20px; text-align: center; }
```
